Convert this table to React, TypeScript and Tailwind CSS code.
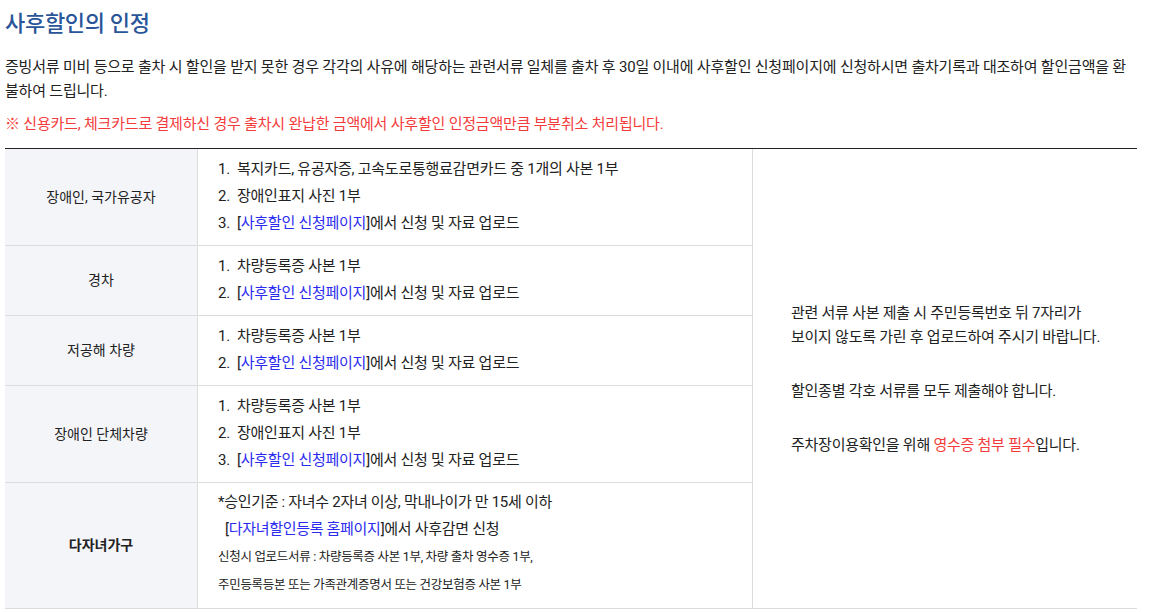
import React from "react";

const Link = ({ children }: { children: React.ReactNode }) => (
  <span>
    [<span className="text-[#2b2bef]">{children}</span>]
  </span>
);

const Item = ({ n, children }: { n: number; children: React.ReactNode }) => (
  <div className="leading-[27px] whitespace-nowrap">
    <span className="inline-block w-[19px]">{n}.</span>
    {children}
  </div>
);

const Head = ({ children, bold }: { children: React.ReactNode; bold?: boolean }) => (
  <div
    className={
      "flex items-center justify-center bg-[#f4f5f9] border-r border-b border-[#dcdcdc] text-[14px] text-[#222] " +
      (bold ? "font-bold" : "")
    }
  >
    {children}
  </div>
);

const Body = ({ children, last }: { children: React.ReactNode; last?: boolean }) => (
  <div
    className={
      "border-r border-b border-[#dcdcdc] pl-[20px] text-[#222] text-[15px] " +
      (last ? "pt-[6px] pb-[9px] tracking-[-0.3px]" : "pt-[7px] pb-[8px] tracking-[-0.25px]")
    }
  >
    {children}
  </div>
);

const upload = (
  <>
    <Link>사후할인 신청페이지</Link>에서 신청 및 자료 업로드
  </>
);

export default function App() {
  return (
    <div
      className="w-[1161px] h-[612px] bg-white px-[5px] pt-[9px] text-[#222] overflow-hidden"
      style={{ fontFamily: 'Roboto, "Noto Sans CJK KR", "Noto Sans", sans-serif' }}
    >
      <h1 className="text-[22px] leading-[30px] text-[#2a5699] font-medium tracking-[-0.3px]">사후할인의 인정</h1>
      <p className="mt-[16px] text-[15px] leading-[24px] tracking-[-0.2px] whitespace-nowrap">
        증빙서류 미비 등으로 출차 시 할인을 받지 못한 경우 각각의 사유에 해당하는 관련서류 일체를 출차 후 30일 이내에 사후할인 신청페이지에 신청하시면 출차기록과 대조하여 할인금액을 환
        <br />
        불하여 드립니다.
      </p>
      <p className="mt-[9px] text-[15px] leading-[24px] tracking-[-0.2px] text-[#f43b3b] whitespace-nowrap">
        ※ 신용카드, 체크카드로 결제하신 경우 출차시 완납한 금액에서 사후할인 인정금액만큼 부분취소 처리됩니다.
      </p>

      <div className="mt-[12px] w-[1132px] border-t border-[#222] grid grid-cols-[193px_555px_384px]">
        <Head>장애인, 국가유공자</Head>
        <Body>
          <Item n={1}>복지카드, 유공자증, 고속도로통행료감면카드 중 1개의 사본 1부</Item>
          <Item n={2}>장애인표지 사진 1부</Item>
          <Item n={3}>{upload}</Item>
        </Body>
        <div className="col-start-3 row-start-1 row-span-5 border-b border-[#dcdcdc] flex flex-col justify-center pl-[38px] text-[15px] leading-[24px] tracking-[-0.25px] whitespace-nowrap">
          <p>
            관련 서류 사본 제출 시 주민등록번호 뒤 7자리가
            <br />
            보이지 않도록 가린 후 업로드하여 주시기 바랍니다.
          </p>
          <p className="mt-[30px]">할인종별 각호 서류를 모두 제출해야 합니다.</p>
          <p className="mt-[30px]">
            주차장이용확인을 위해 <span className="text-[#f43b3b]">영수증 첨부 필수</span>입니다.
          </p>
        </div>

        <Head>경차</Head>
        <Body>
          <Item n={1}>차량등록증 사본 1부</Item>
          <Item n={2}>{upload}</Item>
        </Body>

        <Head>저공해 차량</Head>
        <Body>
          <Item n={1}>차량등록증 사본 1부</Item>
          <Item n={2}>{upload}</Item>
        </Body>

        <Head>장애인 단체차량</Head>
        <Body>
          <Item n={1}>차량등록증 사본 1부</Item>
          <Item n={2}>장애인표지 사진 1부</Item>
          <Item n={3}>{upload}</Item>
        </Body>

        <Head bold>다자녀가구</Head>
        <Body last>
          <div className="leading-[27px] whitespace-nowrap">*승인기준 : 자녀수 2자녀 이상, 막내나이가 만 15세 이하</div>
          <div className="leading-[27px] whitespace-nowrap pl-[7px]">
            <Link>다자녀할인등록 홈페이지</Link>에서 사후감면 신청
          </div>
          <div className="text-[12.5px] leading-[28px] tracking-[-0.3px] whitespace-nowrap">
            신청시 업로드서류 : 차량등록증 사본 1부, 차량 출차 영수증 1부,
          </div>
          <div className="text-[12.5px] leading-[28px] tracking-[-0.3px] whitespace-nowrap">
            주민등록등본 또는 가족관계증명서 또는 건강보험증 사본 1부
          </div>
        </Body>
      </div>
    </div>
  );
}
